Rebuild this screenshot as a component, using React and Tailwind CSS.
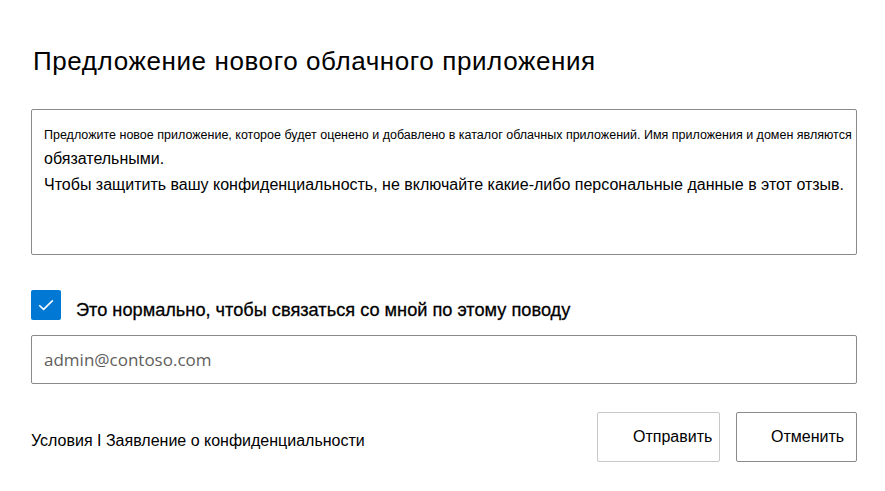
export default function App() {
  return (
    <div
      className="w-[885px] h-[491px] bg-white text-black overflow-hidden"
      style={{ fontFamily: '"Liberation Sans", Arial, sans-serif' }}
    >
      <div className="pl-[31px] pr-[28px] pt-[45px]">
        <h1 className="text-[26px] leading-[32px] pl-[2px] tracking-[0.6px] text-[#000]">
          Предложение нового облачного приложения
        </h1>
        <div className="mt-[32px] h-[146px] border border-[#8a8a8a] rounded-[2px] pl-[12px] pr-[4px] pt-[17px]">
          <div className="text-[12.5px] leading-[16px] whitespace-nowrap">
            Предложите новое приложение, которое будет оценено и добавлено в каталог облачных приложений. Имя приложения и домен являются
          </div>
          <div className="text-[16px] leading-[26px] mt-[3px]">обязательными.</div>
          <div className="text-[16px] leading-[26px]">
            Чтобы защитить вашу конфиденциальность, не включайте какие-либо персональные данные в этот отзыв.
          </div>
        </div>
        <div className="mt-[33px] flex items-center">
          <div className="w-[30px] h-[30px] rounded-[2px] bg-[#0078d4] flex items-center justify-center">
            <svg width="16" height="12" viewBox="0 0 16 12" fill="none">
              <path d="M1.2 6.2 L5.6 10.4 L14.8 1.4" stroke="white" strokeWidth="1.5" />
            </svg>
          </div>
          <span className="ml-[15px] text-[18.2px] leading-[24px] mt-[10px] [-webkit-text-stroke:0.3px_black]">
            Это нормально, чтобы связаться со мной по этому поводу
          </span>
        </div>
        <div className="mt-[13px] h-[49px] border border-[#8a8a8a] rounded-[2px] flex items-center pl-[12px]">
          <span className="text-[17px] text-[#605e5c]" style={{ fontFamily: '"Open Sans", "Noto Sans", sans-serif' }}>
            admin@contoso.com
          </span>
        </div>
        <div className="mt-[28px] flex items-center">
          <span className="text-[16px] leading-[20px] mt-[8px]">
            Условия I Заявление о конфиденциальности
          </span>
          <div className="ml-auto flex gap-[16px]">
            <button className="w-[123px] h-[50px] border border-[#c8c8c8] rounded-[2px] bg-white text-[16px] pl-[35px] pr-[8px] text-left">
              Отправить
            </button>
            <button className="w-[121px] h-[50px] border border-[#8a8a8a] rounded-[2px] bg-white text-[16px] pl-[34px] pr-[8px] text-left">
              Отменить
            </button>
          </div>
        </div>
      </div>
    </div>
  );
}
